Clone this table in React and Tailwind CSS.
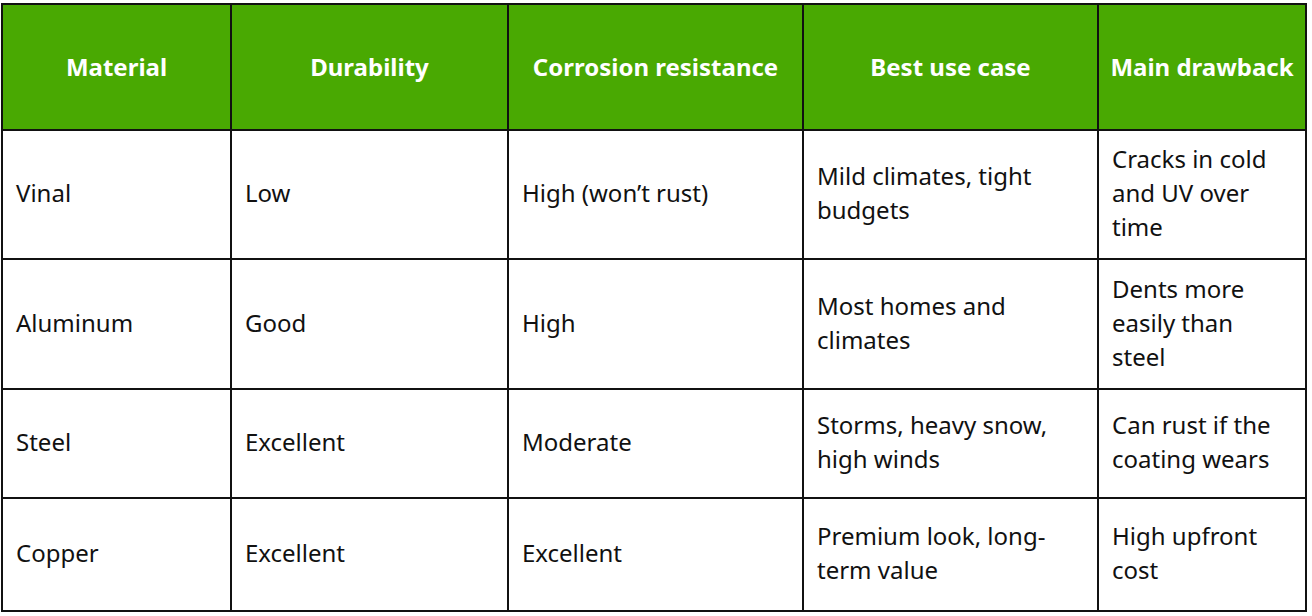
const headers = ["Material", "Durability", "Corrosion resistance", "Best use case", "Main drawback"];

const rows = [
  { h: "h-[129px]", cells: ["Vinal", "Low", "High (won\u2019t rust)", "Mild climates, tight budgets", "Cracks in cold and UV over time"] },
  { h: "h-[130px]", cells: ["Aluminum", "Good", "High", "Most homes and climates", "Dents more easily than steel"] },
  { h: "h-[109px]", cells: ["Steel", "Excellent", "Moderate", "Storms, heavy snow, high winds", "Can rust if the coating wears"] },
  { h: "h-[113px]", cells: ["Copper", "Excellent", "Excellent", "Premium look, long-term value", "High upfront cost"] },
];

const widths = ["w-[229px]", "w-[277px]", "w-[295px]", "w-[295px]", "w-[208px]"];

export default function App() {
  return (
    <div className="w-[1312px] h-[616px] bg-white pt-[3px] pl-[1px]" style={{ fontFamily: "'Noto Sans', 'Open Sans', sans-serif" }}>
      <table className="table-fixed border-collapse w-[1305px] border-2 border-[#111]">
        <colgroup>
          {widths.map((w, i) => (
            <col key={i} className={w} />
          ))}
        </colgroup>
        <thead>
          <tr className="h-[126px] bg-[#49a902]">
            {headers.map((h) => (
              <th key={h} className="border-2 border-[#111] px-[8px] text-center text-white font-bold text-[24px] leading-[34px]">
                {h}
              </th>
            ))}
          </tr>
        </thead>
        <tbody>
          {rows.map((r) => (
            <tr key={r.cells[0]} className={r.h}>
              {r.cells.map((c, i) => (
                <td key={i} className="border-2 border-[#111] pl-[13px] pr-[20px] pb-[3px] align-middle text-[#111] text-[24px] leading-[34px]">
                  {c}
                </td>
              ))}
            </tr>
          ))}
        </tbody>
      </table>
    </div>
  );
}
